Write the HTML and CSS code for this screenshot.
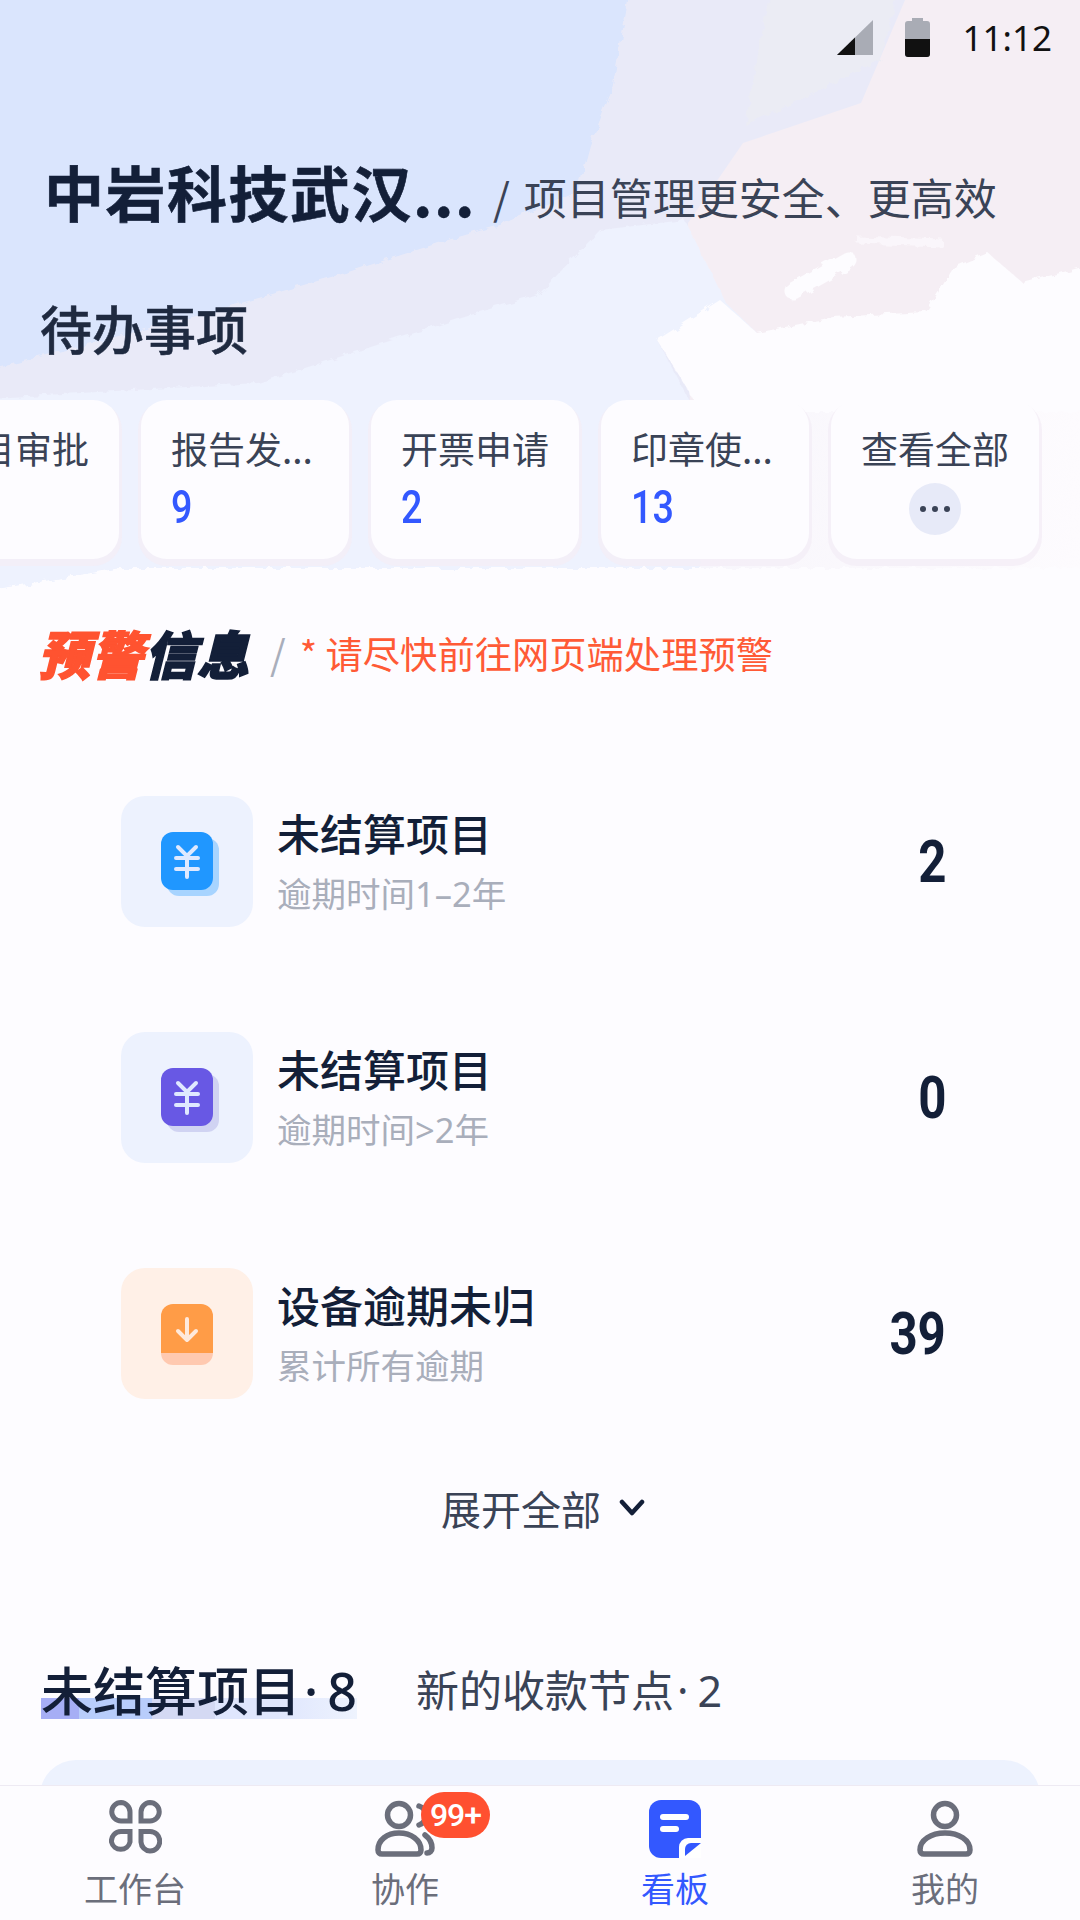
FILE: index.html
```html
<!DOCTYPE html>
<html lang="zh-CN">
<head>
<meta charset="UTF-8">
<meta name="viewport" content="width=device-width, initial-scale=1.0">
<title>看板</title>
<link rel="stylesheet" href="styles.css">
</head>
<body>
<div class="page">
  <!-- brush painted backdrop behind the header -->
  <svg class="backdrop" viewBox="0 0 1080 620" width="1080" height="620">
    <defs>
      <filter id="rough" x="-5%" y="-5%" width="110%" height="110%">
        <feTurbulence type="fractalNoise" baseFrequency="0.12" numOctaves="2" seed="4"/>
        <feDisplacementMap in="SourceGraphic" scale="8"/>
      </filter>
      <linearGradient id="band" x1="0" x2="1" y1="0" y2="0">
        <stop offset="0" stop-color="#eef1fd"/>
        <stop offset="0.5" stop-color="#f2f3fc"/>
        <stop offset="0.7" stop-color="#f9f7fc"/>
        <stop offset="1" stop-color="#fdfbfe"/>
      </linearGradient>
    </defs>
    <rect width="1080" height="420" fill="#e9eaf8"/>
    <path d="M905 0H1080V420H690L688 223L743 143L861 103Z" fill="#f5eef4"/>
    <g filter="url(#rough)">
      <path d="M770 -10H900L880 60L800 100L745 125Z" fill="#ebecf4"/>
      <path d="M-10 400H1090V568H120L-10 590Z" fill="url(#band)"/>
      <path d="M540 293L600 230L685 220L726 303L757 333L657 340L700 420V568H120L-10 590V398L258 383Z" fill="#eef2fe"/>
      <path d="M657 340L720 300L757 333L833 317L926 312L954 267L988 253L1023 283L1090 265V412H700L692 397Z" fill="#fdfcff"/>
      <path d="M793 291L848 260" fill="none" stroke="#fdfcff" stroke-width="17" stroke-linecap="round"/>
      <path d="M857 240L943 243" fill="none" stroke="#fdfcff" stroke-width="7" opacity="0.6"/>
      <path d="M630 -10L612 90L590 145L578 190L500 225L448 240L345 273L200 315L103 340L-10 370V-10Z" fill="#dae5fd"/>
    </g>
  </svg>

  <main class="content">
    <div class="status-bar">
      <svg class="signal" width="36" height="35" viewBox="0 0 36 35"><path d="M36 0V35H0Z" fill="#a9acb5"/><path d="M18 17.500V35H0Z" fill="#111"/></svg>
      <svg class="battery" width="25" height="39" viewBox="0 0 25 39"><path d="M7 0H18V3H22A3 3 0 0 1 25 6V36A3 3 0 0 1 22 39H3A3 3 0 0 1 0 36V6A3 3 0 0 1 3 3H7Z" fill="#a9acb5"/><path d="M0 21H25V36A3 3 0 0 1 22 39H3A3 3 0 0 1 0 36Z" fill="#111"/></svg>
      <span class="clock">11:12</span>
    </div>

    <div class="title-row">
      <h1>中岩科技武汉...</h1>
      <span class="slogan"><span class="slogan-slash">/</span>项目管理更安全、更高效</span>
    </div>

    <h2 class="todo-title">待办事项</h2>
    <div class="todo-row">
      <div class="todo-card"><div class="todo-name">项目审批</div></div>
      <div class="todo-card"><div class="todo-name">报告发...</div><div class="todo-num">9</div></div>
      <div class="todo-card"><div class="todo-name">开票申请</div><div class="todo-num">2</div></div>
      <div class="todo-card"><div class="todo-name">印章使...</div><div class="todo-num">13</div></div>
      <div class="todo-card todo-all"><div class="todo-name">查看全部</div><div class="more-dot"><i></i><i></i><i></i></div></div>
    </div>

    <div class="warn-head">
      <span class="warn-title"><em>预警</em>信息</span>
      <span class="warn-slash">/</span>
      <span class="warn-note">* 请尽快前往网页端处理预警</span>
    </div>

    <div class="warn-list">
      <div class="warn-row">
        <div class="warn-icon">
          <svg width="58" height="64" viewBox="0 0 58 64">
            <rect x="6" y="6" width="52" height="58" rx="12" fill="#a7d4ff"/>
            <rect width="52" height="58" rx="12" fill="#2097ff"/>
            <path d="M17 15L26 24L35 15M15 26H37M15 37H37M26 24V45" fill="none" stroke="#dfe9ff" stroke-width="4" stroke-linecap="round"/>
          </svg>
        </div>
        <div class="warn-text"><div class="warn-name">未结算项目</div><div class="warn-sub">逾期时间1–2年</div></div>
        <div class="warn-value"><span>2</span></div>
      </div>
      <div class="warn-row">
        <div class="warn-icon">
          <svg width="58" height="64" viewBox="0 0 58 64">
            <rect x="6" y="6" width="52" height="58" rx="12" fill="#d0d3f2"/>
            <rect width="52" height="58" rx="12" fill="#6858e4"/>
            <path d="M17 15L26 24L35 15M15 26H37M15 37H37M26 24V45" fill="none" stroke="#dfe9ff" stroke-width="4" stroke-linecap="round"/>
          </svg>
        </div>
        <div class="warn-text"><div class="warn-name">未结算项目</div><div class="warn-sub">逾期时间&gt;2年</div></div>
        <div class="warn-value"><span>0</span></div>
      </div>
      <div class="warn-row warn-row-orange">
        <div class="warn-icon">
          <svg width="52" height="61" viewBox="0 0 52 61">
            <rect y="3" width="52" height="58" rx="12" fill="#ffc9b0"/>
            <path d="M12 0H40A12 12 0 0 1 52 12V49H0V12A12 12 0 0 1 12 0Z" fill="#ff9c47"/>
            <path d="M26 15V36M17 27L26 36L35 27" fill="none" stroke="#ffe9dc" stroke-width="4" stroke-linecap="round" stroke-linejoin="round"/>
          </svg>
        </div>
        <div class="warn-text"><div class="warn-name">设备逾期未归</div><div class="warn-sub">累计所有逾期</div></div>
        <div class="warn-value"><span>39</span></div>
      </div>
    </div>

    <div class="expand">
      <span>展开全部</span>
      <svg width="26" height="18" viewBox="0 0 26 18"><path d="M3 3L13 14L23 3" fill="none" stroke="#131f38" stroke-width="4.500" stroke-linecap="round" stroke-linejoin="round"/></svg>
    </div>

    <div class="project-tabs">
      <span class="project-tab active">未结算项目<span class="tab-dot">·</span>8</span>
      <span class="project-tab">新的收款节点<span class="tab-dot">·</span>2</span>
    </div>
    <div class="project-card"></div>
  </main>

  <nav class="tabbar">
    <div class="tab">
      <div class="tab-icon">
        <svg width="53" height="58" viewBox="0 0 53 58" fill="none" stroke="#6b6e7b" stroke-width="5">
          <path d="M12 2.500A9.500 9.500 0 0 1 21 12V21H12A9.250 9.250 0 0 1 12 2.500Z"/>
          <path d="M41 2.500A9.250 9.250 0 0 1 41 21H32V12A9.500 9.500 0 0 1 41 2.500Z"/>
          <path d="M12 31.500H21V42A9.500 9.500 0 0 1 2.500 42A9.500 9.500 0 0 1 12 31.500Z"/>
          <path d="M32 31.500H41A9.750 9.750 0 0 1 41 51A9.500 9.500 0 0 1 32 42Z"/>
        </svg>
      </div>
      <span>工作台</span>
    </div>
    <div class="tab">
      <div class="tab-icon">
        <svg width="60" height="58" viewBox="0 0 60 58" fill="none" stroke="#6b6e7b" stroke-width="5.500" stroke-linecap="round">
          <circle cx="24" cy="15" r="11.500"/>
          <path d="M3 50C3 40 12 33 24 33S46 40 46 50C46 52.500 44.500 54 42 54H7C4.500 54 3 52.500 3 50Z"/>
          <path d="M44 6A10 10 0 0 1 44 25M50 35C54 38 57 43 57 48C57 51 55 53 52 53"/>
        </svg>
        <span class="badge">99+</span>
      </div>
      <span>协作</span>
    </div>
    <div class="tab tab-active">
      <div class="tab-icon">
        <svg width="52" height="58" viewBox="0 0 52 58">
          <rect width="52" height="58" rx="12" fill="#3358ff"/>
          <path d="M30 58V47A9 9 0 0 1 39 38H52V58Z" fill="#fff"/>
          <path d="M36 56V49A6 6 0 0 1 42 43H52Z" fill="#3358ff"/>
          <rect x="11" y="14" width="29" height="6" rx="3" fill="#fff"/>
          <rect x="11" y="26" width="19" height="6" rx="3" fill="#fff"/>
        </svg>
      </div>
      <span>看板</span>
    </div>
    <div class="tab">
      <div class="tab-icon">
        <svg width="56" height="58" viewBox="0 0 56 58" fill="none" stroke="#6b6e7b" stroke-width="5.500">
          <circle cx="28" cy="15" r="11.500"/>
          <path d="M3 50C3 40 14 33 28 33S53 40 53 50C53 52.500 51.500 54 49 54H7C4.500 54 3 52.500 3 50Z"/>
        </svg>
      </div>
      <span>我的</span>
    </div>
  </nav>
</div>
</body>
</html>
```

FILE: styles.css
```css
/* Dashboard screen, 1080 x 1920 */
* {
  box-sizing: border-box;
}
body {
  margin: 0;
  background-color: #fdfcff;
  color: #131f38;
  font-family: "Noto Sans CJK SC", "Noto Sans", sans-serif;
}
.page {
  position: relative;
  width: 1080px;
  height: 1920px;
  overflow: hidden;
  display: flex;
  flex-direction: column;
}
.backdrop {
  position: absolute;
  top: 0;
  left: 0;
}
.content {
  position: relative;
  flex: 1;
  min-height: 0;
  overflow: hidden;
}

/* status bar */
.status-bar {
  height: 75px;
  padding-right: 28px;
  display: flex;
  justify-content: flex-end;
  align-items: center;
}
.signal {
  margin-right: 32px;
}
.battery {
  margin-right: 33px;
}
.clock {
  font-family: "Noto Sans", sans-serif;
  font-size: 35px;
  color: #111;
}

/* title */
.title-row {
  margin-top: 86px;
  padding-left: 44px;
  height: 70px;
  display: flex;
  align-items: center;
}
h1 {
  margin: 0 17px 10px 0;
  font-size: 60px;
  line-height: 70px;
  font-weight: 700;
  letter-spacing: 1.500px;
  white-space: nowrap;
  -webkit-text-stroke: 0.600px currentColor;
}
.slogan {
  font-size: 43px;
  line-height: 70px;
  color: #3a4356;
  white-space: nowrap;
}
.slogan-slash {
  margin-right: 14px;
}

/* to-do cards */
.todo-title {
  margin: 67px 0 0 40px;
  font-size: 52px;
  line-height: 60px;
  font-weight: 500;
  color: #1f2a40;
  -webkit-text-stroke: 0.500px currentColor;
}
.todo-row {
  margin: 42px 0 0 -89px;
  display: flex;
  gap: 22px;
}
.todo-card {
  flex: none;
  width: 208px;
  height: 159px;
  padding: 24px 0 0 30px;
  background-color: #fdfcff;
  border-radius: 26px;
  box-shadow: 0 4px 0 3px rgba(244, 238, 246, 0.8);
}
.todo-name {
  font-size: 37px;
  line-height: 48px;
  color: #3a4356;
  white-space: nowrap;
}
.todo-num {
  margin-top: 8px;
  font-family: "Roboto", sans-serif;
  font-size: 46px;
  font-weight: 500;
  line-height: 54px;
  color: #3358ff;
  transform: scaleX(0.82);
  transform-origin: left;
}
.todo-all {
  padding-left: 0;
  text-align: center;
}
.more-dot {
  width: 52px;
  height: 52px;
  margin: 11px auto 0;
  background-color: #e7eaf8;
  border-radius: 50%;
  display: flex;
  justify-content: center;
  align-items: center;
  gap: 6px;
}
.more-dot i {
  width: 6px;
  height: 6px;
  background-color: #3a4356;
  border-radius: 50%;
}

/* warnings */
.warn-head {
  margin: 64px 0 0 38px;
  height: 60px;
  display: flex;
  align-items: center;
}
.warn-title {
  font-size: 52px;
  line-height: 60px;
  font-weight: 900;
  font-style: italic;
  letter-spacing: 1px;
  white-space: nowrap;
  -webkit-text-stroke: 1.500px currentColor;
}
.warn-title em {
  color: #ff5330;
}
.warn-slash {
  margin-left: 20px;
  font-size: 40px;
  color: #a9aebb;
}
.warn-note {
  margin-left: 14px;
  font-size: 37.300px;
  color: #ff5a36;
  white-space: nowrap;
}
.warn-list {
  margin-top: 113px;
  padding: 0 134px 0 121px;
  display: flex;
  flex-direction: column;
  gap: 105px;
}
.warn-row {
  height: 131px;
  display: flex;
  align-items: center;
}
.warn-icon {
  flex: none;
  width: 132px;
  height: 131px;
  padding: 36px 0 0 40px;
  background-color: #edf2fe;
  border-radius: 24px;
}
.warn-row-orange .warn-icon {
  background-color: #fff0e7;
}
.warn-icon svg {
  display: block;
}
.warn-text {
  flex: 1;
  margin-left: 24px;
}
.warn-name {
  font-size: 43px;
  line-height: 56px;
  font-weight: 500;
  margin-top: -2px;
}
.warn-sub {
  margin-top: 11px;
  font-family: "Noto Sans", "Noto Sans CJK SC", sans-serif;
  font-size: 34.500px;
  line-height: 46px;
  color: #a9aebb;
}
.warn-value {
  font-family: "Roboto", sans-serif;
  font-size: 60px;
  font-weight: 700;
}
.warn-value span {
  display: block;
  transform: scaleX(0.82);
  transform-origin: right;
}

.expand {
  margin-top: 84px;
  height: 50px;
  padding-left: 441px;
  display: flex;
  align-items: center;
  gap: 18px;
  font-size: 40px;
  color: #3a4356;
}

/* project tabs */
.project-tabs {
  margin: 125px 0 0 41px;
  height: 60px;
  display: flex;
  align-items: center;
  gap: 59px;
}
.project-tab {
  font-family: "Noto Sans", "Noto Sans CJK SC", sans-serif;
  font-size: 43px;
  color: #3a4356;
  white-space: nowrap;
}
.tab-dot {
  margin: 0 9px 0 3px;
}
.project-tab.active {
  font-size: 52px;
  font-weight: 500;
  color: #131f38;
  background: linear-gradient(90deg, #a6aef5 0, #a6aef5 12%, #b8cdfb 12%, #b8cdfb 35%, #d4d9f3 35%, #d4d9f3 55%, #dfe6fd 55%, #dfe6fd 75%, #eef3fe 100%) no-repeat 0 88% / 100% 21px;
}
.project-card {
  margin: 42px 40px 0;
  height: 200px;
  background-color: #edf2fe;
  border-radius: 36px;
}

/* bottom tabs */
.tabbar {
  position: relative;
  flex: none;
  height: 135px;
  padding-top: 14px;
  display: flex;
  background-color: #fdfcff;
  border-top: 1px solid #eeeaf3;
}
.tab {
  flex: 1;
  display: flex;
  flex-direction: column;
  align-items: center;
  font-size: 34px;
  line-height: 46px;
  color: #6b6e7b;
}
.tab-active {
  color: #3358ff;
}
.tab-icon {
  position: relative;
  height: 58px;
  margin-bottom: 7px;
}
.tab-icon svg {
  display: block;
}
.badge {
  position: absolute;
  top: -8px;
  left: 46px;
  width: 69px;
  height: 46px;
  background-color: #ff5030;
  border-radius: 23px;
  color: #fff;
  font-family: "Roboto", sans-serif;
  font-size: 32px;
  font-weight: 500;
  letter-spacing: -1px;
  line-height: 46px;
  text-align: center;
}
```
